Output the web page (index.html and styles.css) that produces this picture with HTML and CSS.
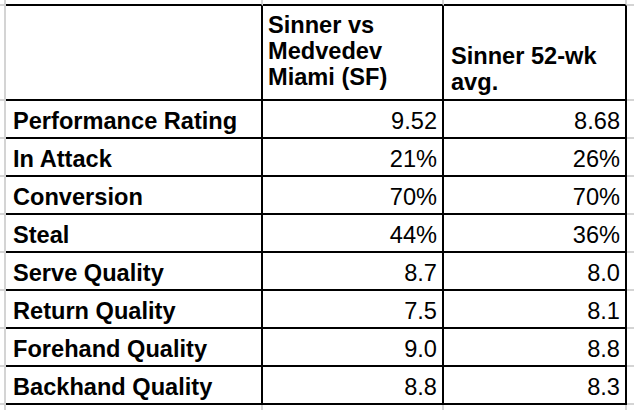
FILE: index.html
```html
<!DOCTYPE html>
<html lang="en">
<head>
<meta charset="utf-8">
<title>Sinner vs Medvedev</title>
<link rel="stylesheet" href="styles.css">
</head>
<body>
<div class="sheet">
  <!-- top partial row -->
  <div class="c edge-l"></div>
  <div class="c top"></div>
  <div class="c top"></div>
  <div class="c top"></div>
  <div class="c edge-r"></div>

  <!-- header -->
  <div class="c edge-l"></div>
  <div class="c cell label"></div>
  <div class="c cell head h2">Sinner vs<br>Medvedev<br>Miami (SF)</div>
  <div class="c cell head h3">Sinner 52-wk<br>avg.</div>
  <div class="c edge-r"></div>

  <div class="c edge-l"></div>
  <div class="c cell label">Performance Rating</div>
  <div class="c cell num">9.52</div>
  <div class="c cell num">8.68</div>
  <div class="c edge-r"></div>

  <div class="c edge-l"></div>
  <div class="c cell label">In Attack</div>
  <div class="c cell num">21%</div>
  <div class="c cell num">26%</div>
  <div class="c edge-r"></div>

  <div class="c edge-l"></div>
  <div class="c cell label">Conversion</div>
  <div class="c cell num">70%</div>
  <div class="c cell num">70%</div>
  <div class="c edge-r"></div>

  <div class="c edge-l"></div>
  <div class="c cell label">Steal</div>
  <div class="c cell num">44%</div>
  <div class="c cell num">36%</div>
  <div class="c edge-r"></div>

  <div class="c edge-l"></div>
  <div class="c cell label">Serve Quality</div>
  <div class="c cell num">8.7</div>
  <div class="c cell num">8.0</div>
  <div class="c edge-r"></div>

  <div class="c edge-l"></div>
  <div class="c cell label">Return Quality</div>
  <div class="c cell num">7.5</div>
  <div class="c cell num">8.1</div>
  <div class="c edge-r"></div>

  <div class="c edge-l"></div>
  <div class="c cell label">Forehand Quality</div>
  <div class="c cell num">9.0</div>
  <div class="c cell num">8.8</div>
  <div class="c edge-r"></div>

  <div class="c edge-l"></div>
  <div class="c cell label">Backhand Quality</div>
  <div class="c cell num">8.8</div>
  <div class="c cell num">8.3</div>
  <div class="c edge-r"></div>

  <!-- bottom partial row -->
  <div class="c edge-l"></div>
  <div class="c bottom"></div>
  <div class="c bottom"></div>
  <div class="c bottom"></div>
  <div class="c edge-r"></div>
</div>
</body>
</html>
```

FILE: styles.css
```css
html, body {
  margin: 0;
  padding: 0;
  background: #ffffff;
  overflow: hidden;
}

.sheet {
  display: grid;
  grid-template-columns: 6px 257px 181px 183px 20px;
  grid-template-rows: 6px 95px repeat(8, 38px) 20px;
  font-family: "Liberation Sans", Arial, sans-serif;
  font-size: 23.6px;
  line-height: 26px;
  color: #000;
}

.c {
  box-sizing: border-box;
  display: flex;
  align-items: flex-end;
  white-space: nowrap;
}

.edge-l {
  border-right: 2px solid #d4d4d4;
  border-bottom: 2px solid #d4d4d4;
}

.edge-r {
  border-bottom: 2px solid #d4d4d4;
}

.top {
  border-right: 2px solid #d4d4d4;
  border-bottom: 2px solid #000;
}

.bottom {
  border-right: 2px solid #d4d4d4;
}

.cell {
  border-right: 2px solid #000;
  border-bottom: 2px solid #000;
  padding: 0 5px 3px 7px;
}

.label {
  font-weight: bold;
}

.head {
  font-weight: bold;
}

.h2 {
  padding-left: 5px;
  padding-bottom: 9px;
}

.h3 {
  padding-left: 7px;
  padding-bottom: 4px;
}

.num {
  justify-content: flex-end;
}
```
